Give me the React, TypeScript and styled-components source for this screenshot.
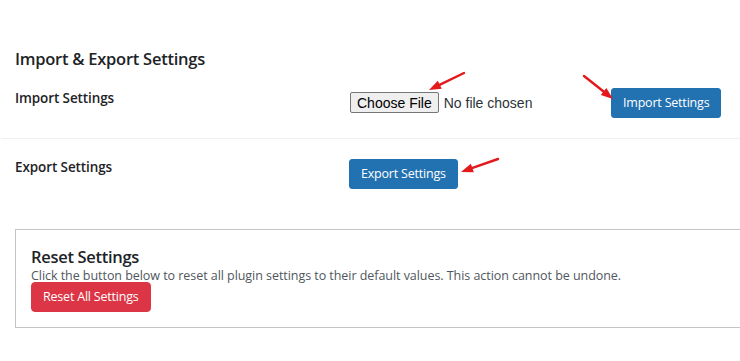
import React from "react";
import styled, { createGlobalStyle } from "styled-components";

const Global = createGlobalStyle`
  html, body { margin: 0; padding: 0; background: #ffffff; }
  body { font-family: "Open Sans", "Noto Sans", sans-serif; color: #1d2327; }
  * { box-sizing: border-box; }
`;

const Page = styled.div`
  position: relative;
  width: 740px;
  height: 361px;
  overflow: hidden;
  padding: 47px 0 0 1px;
`;

const Heading = styled.h2`
  margin: 0 0 12px 14px;
  font-size: 16.5px;
  letter-spacing: -0.25px;
  line-height: 24px;
  font-weight: 600;
  color: #1d2327;
`;

const Row = styled.div<{ $divider?: boolean; $pt: number; $pb: number }>`
  display: grid;
  grid-template-columns: 348px 1fr;
  align-items: start;
  padding: ${(p) => p.$pt}px 0 ${(p) => p.$pb}px;
  border-bottom: ${(p) => (p.$divider ? "1px solid #f0f0f1" : "none")};
`;

const Label = styled.div<{ $offset: number }>`
  padding-left: 14px;
  margin-top: ${(p) => p.$offset}px;
  font-size: 13.5px;
  letter-spacing: -0.1px;
  line-height: 20px;
  font-weight: 600;
  color: #1d2327;
`;

const Field = styled.div`
  display: flex;
  align-items: center;
  gap: 9px;
  height: 30px;
`;

const FileInput = styled.input`
  width: 252px;
  margin: -1px 0 0 1px;
  font-family: "Liberation Sans", Arial, sans-serif;
  font-size: 14px;
  color: #2c3338;
  &::file-selector-button {
    font-family: "Liberation Sans", Arial, sans-serif;
    font-size: 14px;
    height: 21px;
    padding: 0 6px;
    margin-right: 5px;
    color: #000;
    background: #efefef;
    border: 1px solid #767676;
    border-radius: 2px;
  }
`;

const Button = styled.button<{ $tone: "primary" | "danger" }>`
  height: 30px;
  padding: 0 11px;
  border: 1px solid ${(p) => (p.$tone === "primary" ? "#2271b1" : "#dc3545")};
  border-radius: ${(p) => (p.$tone === "primary" ? "3px" : "4px")};
  background: ${(p) => (p.$tone === "primary" ? "#2271b1" : "#dc3545")};
  color: #ffffff;
  font-family: "Open Sans", "Noto Sans", sans-serif;
  font-size: 12.5px;
  letter-spacing: -0.2px;
  line-height: 28px;
  white-space: nowrap;
  cursor: pointer;
`;

const ResetCard = styled.section`
  margin: 20px -40px 0 14px;
  padding: 15px;
  border: 1px solid #c3c4c7;
  background: #ffffff;
`;

const CardTitle = styled.h3`
  margin: 0;
  font-size: 16.5px;
  letter-spacing: -0.3px;
  line-height: 23px;
  font-weight: 600;
  color: #1d2327;
`;

const CardText = styled.p`
  margin: 0 0 -1px;
  font-size: 12.5px;
  letter-spacing: -0.05px;
  line-height: 15px;
  color: #50575e;
`;

const Annotations = styled.svg`
  position: absolute;
  inset: 0;
  width: 740px;
  height: 361px;
  pointer-events: none;
`;

function Arrow({ x1, y1, x2, y2 }: { x1: number; y1: number; x2: number; y2: number }) {
  const dx = x2 - x1;
  const dy = y2 - y1;
  const len = Math.hypot(dx, dy);
  const ux = dx / len;
  const uy = dy / len;
  const head = 12;
  const half = 4.5;
  const bx = x2 - ux * head;
  const by = y2 - uy * head;
  const px = -uy * half;
  const py = ux * half;
  return (
    <g>
      <line x1={x1} y1={y1} x2={bx + ux * 2} y2={by + uy * 2} stroke="#e3191c" strokeWidth={2.4} strokeLinecap="round" />
      <polygon points={`${x2},${y2} ${bx + px},${by + py} ${bx - px},${by - py}`} fill="#e3191c" />
    </g>
  );
}

export default function App() {
  return (
    <>
      <Global />
      <Page>
        <Heading>Import &amp; Export Settings</Heading>
        <Row $divider $pt={5} $pb={20}>
          <Label $offset={0}>Import Settings</Label>
          <Field>
            <FileInput type="file" />
            <Button $tone="primary">Import Settings</Button>
          </Field>
        </Row>
        <Row $pt={20} $pb={20}>
          <Label $offset={-2}>Export Settings</Label>
          <Field>
            <Button $tone="primary">Export Settings</Button>
          </Field>
        </Row>
        <ResetCard>
          <CardTitle>Reset Settings</CardTitle>
          <CardText>
            Click the button below to reset all plugin settings to their default values. This action cannot be undone.
          </CardText>
          <Button $tone="danger">Reset All Settings</Button>
        </ResetCard>
        <Annotations viewBox="0 0 740 361">
          <Arrow x1={464} y1={73} x2={429} y2={90} />
          <Arrow x1={584} y1={76} x2={613} y2={99} />
          <Arrow x1={498} y1={159} x2={461} y2={172} />
        </Annotations>
      </Page>
    </>
  );
}
